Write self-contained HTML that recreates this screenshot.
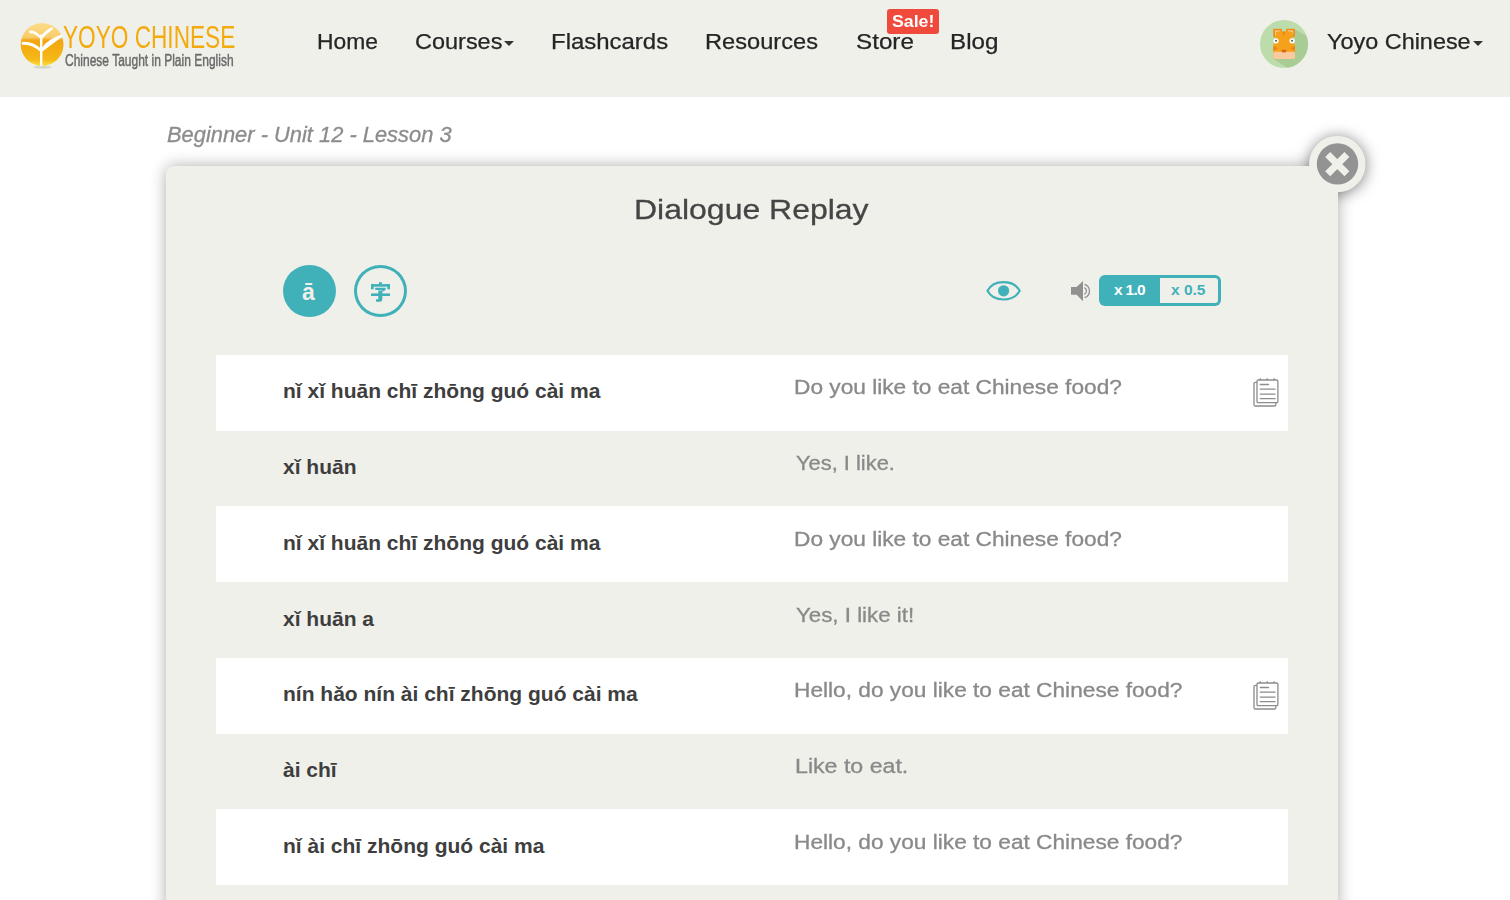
<!DOCTYPE html>
<html><head><meta charset="utf-8">
<style>
*{margin:0;padding:0;box-sizing:border-box}
html,body{width:1510px;height:900px;overflow:hidden;background:#fff;font-family:"Liberation Sans",sans-serif}
.abs{position:absolute}
#hdr{position:absolute;left:0;top:0;width:1510px;height:97px;background:#f0f0eb}
.nav{position:absolute;top:30px;font-size:21.5px;color:#252525;-webkit-text-stroke:.25px #252525;white-space:nowrap;line-height:24px;transform-origin:0 0}
.caret{position:absolute;width:0;height:0;border-left:5px solid transparent;border-right:5px solid transparent;border-top:5px solid #333}
#sale{position:absolute;left:887px;top:9px;width:52px;height:25px;background:#ef4a3b;border-radius:3px}
#saletxt{position:absolute;left:892.3px;top:9px;color:#fff;font-weight:bold;font-size:17px;line-height:25px;white-space:nowrap;transform:scaleX(1.0433);transform-origin:0 0}
#crumb{position:absolute;left:166.7px;top:123px;font-size:21.5px;font-style:italic;color:#8c8c8c;-webkit-text-stroke:.3px #8c8c8c;white-space:nowrap;line-height:24px;transform-origin:0 0}
#card{position:absolute;left:166px;top:166px;width:1172px;height:760px;background:#f0f0eb;border-radius:8px;box-shadow:0 0 16px rgba(0,0,0,.32)}
#title{position:absolute;left:633.5px;top:192px;font-size:28.5px;color:#454545;-webkit-text-stroke:.3px #454545;line-height:34px;white-space:nowrap;transform-origin:0 0}
.row{position:absolute;left:216px;width:1072px;background:#fff}
.py{position:absolute;left:283px;font-weight:bold;font-size:21px;color:#3e3e3e;white-space:nowrap;line-height:24px}
.en{position:absolute;left:794.2px;font-size:19.5px;color:#898989;-webkit-text-stroke:.3px #898989;white-space:nowrap;line-height:24px;transform:scaleX(1.1633);transform-origin:0 0}
.note{position:absolute;left:1252.4px}
</style></head><body>
<div id="hdr">
  <!-- logo -->
  <svg class="abs" style="left:18px;top:18px" width="50" height="54" viewBox="0 0 50 54">
    <defs>
      <linearGradient id="lg" x1="0" y1="0" x2="0" y2="1">
        <stop offset="0" stop-color="#fcdc88"/><stop offset=".33" stop-color="#f8cd6a"/><stop offset=".40" stop-color="#f3a617"/><stop offset=".55" stop-color="#f4ab10"/><stop offset=".85" stop-color="#f5b918"/><stop offset="1" stop-color="#f8e040"/>
      </linearGradient>
    </defs>
    <ellipse cx="24.5" cy="49.2" rx="9" ry="1.6" fill="#c4c4c0" opacity=".6"/>
    <circle cx="24.1" cy="26.5" r="21.4" fill="url(#lg)"/>
    <path d="M22 48 L22 16.5 L24.4 16.5 L24.4 48Z" fill="#fff"/>
    <path d="M22.8 30.3 Q14 22.6 3.8 23.9 L3.9 26.8 Q13 25.6 22.8 34Z" fill="#fff"/>
    <path d="M23.6 30.3 Q30 21 43.6 16.6 L44.4 18.4 Q35 25.5 23.8 34Z" fill="#fff"/>
    <path d="M22.8 18.3 Q17.5 11.8 11.2 12.6 L11.4 15.3 Q17.3 15 22.8 21.2Z" fill="#fff"/>
    <path d="M23.6 17.8 Q27.5 11.5 34.5 9.1 L35 10.9 Q29.5 15 23.6 21.2Z" fill="#fff"/>
  </svg>
  <div class="abs" style="left:63px;top:20px;font-size:30.5px;color:#f3aa0c;line-height:34px;white-space:nowrap;transform:scaleX(.742);transform-origin:0 0">YOYO CHINESE</div>
  <div class="abs" style="left:65px;top:51.5px;font-size:16px;color:#6a6a6a;-webkit-text-stroke:.45px #6a6a6a;line-height:18px;white-space:nowrap;transform:scaleX(.750);transform-origin:0 0">Chinese Taught in Plain English</div>

  <div class="nav" style="left:317.2px;transform:scaleX(1.0615)">Home</div>
  <div class="nav" style="left:414.5px;transform:scaleX(1.0918)">Courses</div><div class="caret" style="left:504px;top:41px"></div>
  <div class="nav" style="left:551.3px;transform:scaleX(1.1141)">Flashcards</div>
  <div class="nav" style="left:704.8px;transform:scaleX(1.0998)">Resources</div>
  <div class="nav" style="left:855.7px;transform:scaleX(1.1263)">Store</div>
  <div id="sale"></div><div id="saletxt">Sale!</div>
  <div class="nav" style="left:949.7px;transform:scaleX(1.1248)">Blog</div>

  <!-- avatar -->
  <svg class="abs" style="left:1260px;top:19.5px" width="48" height="48" viewBox="0 0 48 48">
    <defs><clipPath id="av"><circle cx="24" cy="24" r="24"/></clipPath></defs>
    <circle cx="24" cy="24" r="24" fill="#bcdcab"/>
    <polygon clip-path="url(#av)" points="35,9.6 70,29.6 70,70 48,60 13.3,39.1 35,39.1" fill="#a9cb94"/>
    <rect x="13.3" y="8.8" width="8.6" height="8.5" fill="#f08c12"/>
    <rect x="26.2" y="8.8" width="8.6" height="8.5" fill="#f08c12"/>
    <rect x="15" y="10.3" width="5.3" height="5.9" fill="#f9c691"/>
    <rect x="27.8" y="10.3" width="5.3" height="5.9" fill="#f9c691"/>
    <rect x="15.7" y="11.5" width="17.1" height="27" rx="2.2" fill="#f6a11b"/>
    <rect x="13.3" y="23.2" width="21.7" height="15.9" rx="1.5" fill="#f6a11b"/>
    <path d="M22.3 11.5 L25.3 11.5 L23.8 16.3Z" fill="#ee8410"/>
    <path d="M13.3 25.9 L18 28.2 L13.3 30.9Z M35 25.9 L30.3 28.2 L35 30.9Z" fill="#ee8410"/>
    <rect x="13.3" y="31.7" width="21.7" height="7.4" rx="1.5" fill="#f9c99f"/>
    <rect x="21.9" y="29.8" width="4.3" height="2.5" fill="#d26a10"/>
    <circle cx="16.05" cy="20.8" r="2.6" fill="#fff"/><circle cx="32" cy="20.8" r="2.6" fill="#fff"/>
    <circle cx="16.05" cy="20.8" r="1" fill="#555"/><circle cx="32" cy="20.8" r="1" fill="#555"/>
  </svg>
  <div class="nav" style="left:1327.4px;transform:scaleX(1.0891)">Yoyo Chinese</div><div class="caret" style="left:1473px;top:41px"></div>
</div>

<div id="crumb" style="transform:scaleX(1.0175)">Beginner - Unit 12 - Lesson 3</div>

<div id="card"></div>
<div id="title" style="transform:scaleX(1.1218)">Dialogue Replay</div>

<!-- close -->
<svg class="abs" style="left:1277px;top:104px" width="121" height="121" viewBox="-60.5 -60.5 121 121">
  <defs><filter id="cs" x="-50%" y="-50%" width="200%" height="200%"><feGaussianBlur stdDeviation="7.5"/></filter></defs>
  <circle cx="0" cy="1" r="28.2" fill="rgba(0,0,0,.5)" filter="url(#cs)"/>
</svg>
<div class="abs" style="left:1166px;top:166px;width:172px;height:60px;background:#f0f0eb"></div>
<svg class="abs" style="left:1297px;top:124px" width="81" height="81" viewBox="-40.3 -40.1 81 81">
  <circle cx="0" cy="0" r="28.2" fill="#f0f0eb"/>
  <circle cx="0.2" cy="-0.2" r="20.7" fill="#939393"/>
  <path d="M-9.6 -9.6 L9.6 9.6 M9.6 -9.6 L-9.6 9.6" stroke="#f0f0eb" stroke-width="7"/>
</svg>

<!-- controls -->
<div class="abs" style="left:283px;top:265px;width:52.5px;height:52px;border-radius:50%;background:#40b1b9"></div>
<div class="abs" style="left:299.5px;top:279px;width:18px;text-align:center;font-weight:bold;font-size:23px;line-height:26px;color:#f0f0eb">ā</div>
<div class="abs" style="left:354.2px;top:265px;width:52.6px;height:52px;border-radius:50%;border:3px solid #40b1b9"></div>
<svg class="abs" style="left:370px;top:281px" width="22" height="22" viewBox="0 0 22 22" fill="#40b1b9">
  <rect x="9" y="1.2" width="2.8" height="3"/>
  <rect x="1" y="3.1" width="19" height="2.6"/>
  <rect x="1" y="3.1" width="2.7" height="5.2"/>
  <rect x="17.3" y="3.1" width="2.7" height="5.2"/>
  <path d="M5.2 6.8 L15.6 6.8 L15.6 8.9 L12.2 11 L12.2 9.2 L13 8.9 L5.2 8.9Z"/>
  <rect x="1" y="12.4" width="19" height="2.6"/>
  <path d="M8.3 9.4 L12.3 9.4 L12.3 18.4 Q12.3 20.8 9.8 20.8 L6.2 20.8 L5.8 18.3 L8.3 18.3Z"/>
</svg>

<svg class="abs" style="left:984px;top:278px" width="40" height="25" viewBox="0 0 40 25">
  <path d="M3.5 12.8 C9.5 1.2 29.5 1.2 35.7 12.8 C29.5 24.4 9.5 24.4 3.5 12.8Z" fill="none" stroke="#40b1b9" stroke-width="2.2"/>
  <circle cx="19.6" cy="12.8" r="5.6" fill="#40b1b9"/>
</svg>
<svg class="abs" style="left:1068px;top:278px" width="26" height="26" viewBox="0 0 26 26">
  <path d="M3 9 L8.6 9 L15 3 L15 23.2 L8.6 16.7 L3 16.7Z" fill="#919191"/>
  <path d="M16.3 9.7 A3.6 3.6 0 0 1 16.3 16.3" fill="none" stroke="#919191" stroke-width="1.3"/>
  <path d="M16.5 6.3 A7 7 0 0 1 16.5 19.7" fill="none" stroke="#919191" stroke-width="1.3"/>
</svg>

<div class="abs" style="left:1099px;top:275px;width:122px;height:31px;border-radius:6px;background:#40b1b9"></div>
<div class="abs" style="left:1160px;top:278px;width:58px;height:25px;border-radius:0 3px 3px 0;background:#f0f0eb"></div>
<div class="abs" style="left:1114px;top:281px;font-weight:bold;font-size:15.5px;line-height:18px;color:#fff;white-space:nowrap;letter-spacing:-.7px">x 1.0</div>
<div class="abs" style="left:1171px;top:281px;font-weight:bold;font-size:15.5px;line-height:18px;color:#40b1b9;white-space:nowrap">x 0.5</div>

<div class="row" style="top:355px;height:76px"></div>
<div class="row" style="top:506px;height:76px"></div>
<div class="row" style="top:658px;height:76px"></div>
<div class="row" style="top:809px;height:76px"></div>

<svg class="note" style="top:376px" width="28" height="32" viewBox="0 0 28 32">
  <g fill="none" stroke="#8c8c8c" stroke-width="1.3">
    <path d="M5 6.3 L3.3 6.3 Q2 6.3 2 7.6 L2 28.7 Q2 30 3.3 30 L22.5 30 Q23.8 30 23.8 28.7 L23.8 26.7"/>
    <rect x="5" y="4" width="20.9" height="22.7" rx="1.3"/>
    <path d="M8.3 4 L8.3 2.3 M15.2 4 L15.2 2.3 M22 4 L22 2.3" />
  </g>
  <g stroke="#8c8c8c" stroke-width="1.3" stroke-linecap="round">
    <path d="M8.3 8.5 L16.5 8.5 M8.3 13.2 L23 13.2 M8.3 18.1 L23 18.1 M8.3 22.7 L23 22.7"/>
  </g>
</svg>
<svg class="note" style="top:679px" width="28" height="32" viewBox="0 0 28 32">
  <g fill="none" stroke="#8c8c8c" stroke-width="1.3">
    <path d="M5 6.3 L3.3 6.3 Q2 6.3 2 7.6 L2 28.7 Q2 30 3.3 30 L22.5 30 Q23.8 30 23.8 28.7 L23.8 26.7"/>
    <rect x="5" y="4" width="20.9" height="22.7" rx="1.3"/>
    <path d="M8.3 4 L8.3 2.3 M15.2 4 L15.2 2.3 M22 4 L22 2.3" />
  </g>
  <g stroke="#8c8c8c" stroke-width="1.3" stroke-linecap="round">
    <path d="M8.3 8.5 L16.5 8.5 M8.3 13.2 L23 13.2 M8.3 18.1 L23 18.1 M8.3 22.7 L23 22.7"/>
  </g>
</svg>

<div class="py" style="top:379px">nǐ xǐ huān chī zhōng guó cài ma</div>
<div class="en" style="top:375px">Do you like to eat Chinese food?</div>
<div class="py" style="top:455px">xǐ huān</div>
<div class="en" style="top:451px;left:795.5px;transform:scaleX(1.1217)">Yes, I like.</div>
<div class="py" style="top:531px">nǐ xǐ huān chī zhōng guó cài ma</div>
<div class="en" style="top:527px">Do you like to eat Chinese food?</div>
<div class="py" style="top:607px">xǐ huān a</div>
<div class="en" style="top:603px;left:795.5px;transform:scaleX(1.1432)">Yes, I like it!</div>
<div class="py" style="top:682px">nín hǎo nín ài chī zhōng guó cài ma</div>
<div class="en" style="top:678px">Hello, do you like to eat Chinese food?</div>
<div class="py" style="top:758px">ài chī</div>
<div class="en" style="top:754px;left:794.8px;transform:scaleX(1.1874)">Like to eat.</div>
<div class="py" style="top:834px">nǐ ài chī zhōng guó cài ma</div>
<div class="en" style="top:830px">Hello, do you like to eat Chinese food?</div>
</body></html>
